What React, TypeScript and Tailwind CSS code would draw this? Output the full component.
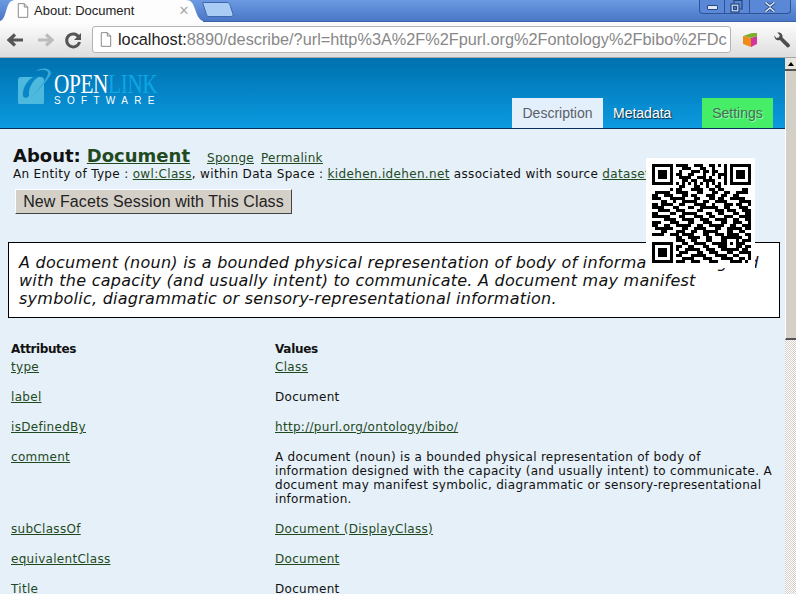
import React from 'react';

const QR_SIZE = 33;

// read off the picture by eye, the marks are overlaid in qrCells
const QR_ROWS = [
  '000000001111001110011010100000000',
  '000000000011100011001000100000000',
  '000000000100011101101100100000000',
  '000000001100110001001011100000000',
  '000000000111100111010010100000000',
  '000000000011011001111000100000000',
  '000000001010101010101010100000000',
  '000000000110001100100110000000000',
  '000000101100011110011011000000110',
  '011111001111000110001100110011110',
  '110011100011011000111001100110000',
  '111000111110001100011011001111100',
  '000110010011111001100111100001111',
  '110111100110001111001000111011001',
  '111100011000110011111100110001110',
  '001111001110000110000111011100111',
  '110000110011111000110011000110011',
  '111111000110001110011000111001111',
  '000011110011110011100111100110011',
  '111000111000110001110001100111001',
  '110011001111100110011111001100111',
  '011111100011001111000110011111011',
  '000110001110011001111100011001100',
  '111100111011110001100111011110011',
  '000000001100111100110001111111001',
  '000000001110011000110001000100111',
  '000000000011001111001111010101100',
  '000000001100110001100011000111011',
  '000000001001111100111001111100110',
  '000000000111000110011100011001111',
  '000000001100011111000111100110001',
  '000000000011110001110001111001101',
  '000000001110011100011100001111010',
];

function inFinder(x: number, y: number) {
  return (x < 8 && y < 8) || (x >= QR_SIZE - 8 && y < 8) || (x < 8 && y >= QR_SIZE - 8);
}

function finderCell(x: number, y: number) {
  const fx = x >= QR_SIZE - 8 ? x - (QR_SIZE - 7) : x;
  const fy = y >= QR_SIZE - 8 ? y - (QR_SIZE - 7) : y;
  if (fx < 0 || fy < 0 || fx > 6 || fy > 6) return false;
  if (fx === 0 || fx === 6 || fy === 0 || fy === 6) return true;
  return fx >= 2 && fx <= 4 && fy >= 2 && fy <= 4;
}

function qrCells() {
  const cells: [number, number][] = [];
  for (let y = 0; y < QR_SIZE; y++) {
    for (let x = 0; x < QR_SIZE; x++) {
      let on = QR_ROWS[y][x] === '1';
      if (inFinder(x, y)) on = finderCell(x, y);
      else if (x >= 24 && x <= 28 && y >= 24 && y <= 28) {
        on = x === 24 || x === 28 || y === 24 || y === 28 || (x === 26 && y === 26);
      }
      if (on) cells.push([x, y]);
    }
  }
  return cells;
}

function PageIcon({ className }: { className: string }) {
  return (
    <svg viewBox="0 0 14 17" className={className} fill="#fff" stroke="#777" strokeWidth="1">
      <path d="M1.5 .5h7l4 4v12h-11z" />
      <path d="M8.5 .5v4h4" fill="none" />
    </svg>
  );
}

function Tab() {
  return (
    <div className="relative w-[203px] h-full shrink-0">
      <svg viewBox="0 0 203 22" className="absolute inset-0 w-[203px] h-[22px]" preserveAspectRatio="none">
        <path d="M0 21 C4 20 5 14 7 8 C9 2 11 0 16 0 H186 C191 0 193 3 195 9 C197 15 199 20 203 21 V22 H0 Z" fill="#fdfdfd" />
      </svg>
      <div className="relative flex items-center h-full pl-[17px]">
        <PageIcon className="w-[12px] h-[15px] shrink-0" />
        <span className="ml-[5px] text-[13px] text-[#222] font-['Liberation_Sans',sans-serif] whitespace-nowrap">About: Document</span>
        <span className="ml-[44px] text-[#aaa] text-[13px] leading-none font-['DejaVu_Sans',sans-serif]">✕</span>
      </div>
    </div>
  );
}

function WindowButtons() {
  return (
    <div className="absolute right-[5px] top-0 w-[92px] h-[14px] flex rounded-b-[4px] border border-t-0 border-[#2f5496] bg-[#5a87d6]">
      <div className="w-[25px] flex items-center justify-center border-r border-[#2f5496]">
        <div className="w-[11px] h-[5px] mt-[1px] rounded-[1px] bg-[#dde8f8] border border-[#27467e]" />
      </div>
      <div className="w-[25px] flex items-center justify-center border-r border-[#2f5496]">
        <svg viewBox="0 0 14 13" className="w-[14px] h-[13px]" fill="none" stroke="#27467e" strokeWidth="1.2">
          <rect x="1" y="4" width="8" height="8" fill="#c6d8f2" />
          <rect x="3.5" y="6.5" width="3" height="3" fill="#5a87d6" />
          <path d="M4 3V0.5h8V9H10" />
        </svg>
      </div>
      <div className="flex-1 flex items-center justify-center">
        <svg viewBox="0 0 12 10" className="w-[12px] h-[10px]">
          <path d="M1.5 .5 6 4l4.500-3.500M1.500 9.500 6 6l4.500 3.500" stroke="#27467e" strokeWidth="3.200" fill="none" />
          <path d="M1.500 .5 6 4l4.500-3.500M1.500 9.500 6 6l4.500 3.500" stroke="#e4edf9" strokeWidth="1.500" fill="none" />
        </svg>
      </div>
    </div>
  );
}

function TitleBar() {
  return (
    <div className="relative h-[22px] shrink-0 flex bg-gradient-to-b from-[#6c9ae2] to-[#4a77c6] border-b border-[#3d62a8]">
      <Tab />
      <svg viewBox="0 0 32 15" className="w-[32px] h-[15px] -ml-[1px] mt-[2px] shrink-0">
        <path d="M1 .5H25C27 .5 28 2 29 6L31 12C31.500 14 30 14.500 29 14.500H7C5 14.500 4.500 13 4 11L1 2C.7 1 .7 .5 1 .5Z" fill="#a9ccf5" stroke="#3f66ad" />
      </svg>
      <WindowButtons />
    </div>
  );
}

function Toolbar() {
  return (
    <div className="h-[36px] shrink-0 flex items-center bg-gradient-to-b from-[#fdfdfd] to-[#dedede] border-b border-[#a8a8a8]">
      <svg viewBox="0 0 92 24" className="w-[92px] h-[24px] shrink-0">
        <path d="M23 12H10M15 6.500 9 12l6 5.500" fill="none" stroke="#555" strokeWidth="3.200" />
        <path d="M38 12h13M46 6.500 52 12l-6 5.500" fill="none" stroke="#bcbcbc" strokeWidth="3.200" />
        <path d="M79 9.500A6.500 6.500 0 1 0 79.500 14" fill="none" stroke="#555" strokeWidth="3" />
        <path d="M81 5v7h-7z" fill="#555" />
      </svg>
      <div className="flex-1 min-w-0 h-[27px] flex items-center rounded-[3px] border border-[#b4b4b4] bg-white overflow-hidden pl-[7px]">
        <PageIcon className="w-[12px] h-[15px] shrink-0" />
        <span className="ml-[6px] text-[16.3px] text-[#888] font-['Liberation_Sans',sans-serif] whitespace-nowrap">
          <span className="text-[#222]">localhost:</span>8890/describe/?url=http%3A%2F%2Fpurl.org%2Fontology%2Fbibo%2FDc
        </span>
      </div>
      <div className="w-[65px] shrink-0 flex items-center pl-[11px] gap-[16px]">
        <svg viewBox="0 0 16 16" className="w-[16px] h-[16px] shrink-0">
          <path d="M1 4 9 6V15L1 12Z" fill="#ef8a1c" />
          <path d="M9 6 15 4V12L9 15Z" fill="#d3359a" />
          <path d="M1 4 10 1H15V4L9 6Z" fill="#7fae2c" />
        </svg>
        <svg viewBox="0 0 16 16" className="w-[17px] h-[17px] shrink-0">
          <path d="M15 13 8 6C8.700 3.500 6.500.5 3 1.500L5.500 4 4.500 6 2 6.500 0.500 4C0 7.500 3 9.500 5.500 8.500L12.500 15.500C13.500 16 15.500 14.500 15 13Z" fill="#4d4d4d" />
        </svg>
      </div>
    </div>
  );
}

function Logo() {
  return (
    <div className="flex items-start pt-[8px] pl-[17px]">
      <svg viewBox="0 0 36 38" className="w-[36px] h-[38px] shrink-0">
        <rect x="1" y="11" width="26" height="28" rx="3" fill="#4db9dd" />
        <path d="M6 30C5 20 14 8 24 10 17 12 11 21 12 30 9 33 7 32 6 30Z" fill="#0a86c6" />
        <path d="M13 33C21 25 31 14 34 8 34 2 25 1 19 5 26 3 32 4 31 8 29 14 19 26 13 33Z" fill="#39a9d9" />
      </svg>
      <div className="ml-[1px] mt-[8px] w-[104px]">
        <div className="origin-left scale-x-[0.76] whitespace-nowrap text-[28px] leading-[20px] tracking-[-0.5px] font-['Liberation_Serif',serif]">
          <span className="text-white">OPEN</span>
          <span className="text-[#0ca6e4]">LINK</span>
        </div>
        <div className="mt-[2px] text-[10px] leading-[10px] tracking-[6.300px] text-white whitespace-nowrap font-['Liberation_Sans',sans-serif]">SOFTWARE</div>
      </div>
    </div>
  );
}

function Header() {
  return (
    <div className="h-[71px] shrink-0 flex justify-between bg-gradient-to-b from-[#0071af] to-[#0c9ae0] border-b border-[#06305f]">
      <Logo />
      <div className="self-end flex items-stretch h-[30px] mr-[12px] text-[14px] font-['Liberation_Sans',sans-serif]">
        <div className="w-[91px] flex items-center justify-center bg-[#e3f0fb] text-[#5a6068]">Description</div>
        <div className="w-[99px] flex items-center pl-[10px] text-white [text-shadow:1px_1px_1px_#223]">Metadata</div>
        <div className="w-[71px] flex items-center justify-center bg-[#45ee66] text-[#4e6a50] [text-shadow:1px_1px_1px_#9fb]">Settings</div>
      </div>
    </div>
  );
}

const LINK = 'text-[#1f4a1f] underline';

const ROWS: { attr: string; value: string; link?: boolean }[] = [
  { attr: 'type', value: 'Class', link: true },
  { attr: 'label', value: 'Document' },
  { attr: 'isDefinedBy', value: 'http://purl.org/ontology/bibo/', link: true },
  {
    attr: 'comment',
    value:
      'A document (noun) is a bounded physical representation of body of\ninformation designed with the capacity (and usually intent) to communicate. A\ndocument may manifest symbolic, diagrammatic or sensory-representational\ninformation.',
  },
  { attr: 'subClassOf', value: 'Document (DisplayClass)', link: true },
  { attr: 'equivalentClass', value: 'Document', link: true },
  { attr: 'Title', value: 'Document' },
];

function Content() {
  return (
    <div className="flex-1 min-h-0 overflow-hidden bg-[#e6f0f8] text-[12px] leading-[14px] text-[#111] font-['DejaVu_Sans',sans-serif]">
      <div className="pl-[13px] pt-[17px]">
        <div className="flex items-baseline h-[21px] whitespace-nowrap">
          <span className="text-[18px] leading-[20px] font-bold">About: </span>
          <a className={`ml-[6px] text-[18px] leading-[20px] font-bold ${LINK}`}>Document</a>
          <a className={`ml-[17px] tracking-[0.3px] ${LINK}`}>Sponge</a>
          <a className={`ml-[7px] tracking-[0.3px] ${LINK}`}>Permalink</a>
        </div>
        <div className="whitespace-nowrap tracking-[0.33px]">
          An Entity of Type : <a className={LINK}>owl:Class</a>, within Data Space : <a className={LINK}>kidehen.idehen.net</a> associated with source <a className={LINK}>dataset</a>
        </div>
        <button className="block ml-[2px] mt-[8px] w-[277px] h-[25px] bg-[#d4d0c8] border border-t-white border-l-white border-r-[#444] border-b-[#444] text-[16px] leading-[20px] tracking-[0.09px] text-[#222] font-['Liberation_Sans',sans-serif]">
          New Facets Session with This Class
        </button>
      </div>
      <div className="ml-[8px] mr-[5px] mt-[28px] h-[76px] border border-black bg-white pl-[10px] pt-[11px] text-[16px] leading-[18px] italic tracking-[0.25px] text-[#111] whitespace-pre-line">
        {'A document (noun) is a bounded physical representation of body of information designed\nwith the capacity (and usually intent) to communicate. A document may manifest\nsymbolic, diagrammatic or sensory-representational information.'}
      </div>
      <div className="grid grid-cols-[264px_494px] pl-[11px] mt-[24px] tracking-[0.3px]">
        <div className="font-bold pb-[4px] tracking-[-0.4px]">Attributes</div>
        <div className="font-bold pb-[4px] tracking-[-0.3px]">Values</div>
        {ROWS.map((row) => (
          <React.Fragment key={row.attr}>
            <div className="pb-[16px]">
              {row.attr === 'Title' ? <span className="text-[#1f4a1f]">{row.attr}</span> : <a className={LINK}>{row.attr}</a>}
            </div>
            <div className="pb-[16px] whitespace-pre">{row.link ? <a className={LINK}>{row.value}</a> : row.value}</div>
          </React.Fragment>
        ))}
      </div>
    </div>
  );
}

function Scrollbar() {
  return (
    <div className="w-[11px] shrink-0 flex flex-col bg-[repeating-conic-gradient(#d4d0c8_0_25%,#fff_0_50%)] bg-[length:2px_2px]">
      <div className="h-[13px] flex items-center justify-center bg-[#e8e5df] border-b-2 border-[#555]">
        <div className="w-0 h-0 border-x-[3px] border-x-transparent border-b-[4px] border-b-black" />
      </div>
      <div className="h-[269px] bg-[#d4d0c8] border-l border-white border-b-2 border-b-[#555]" />
    </div>
  );
}

export default function App() {
  const cells = qrCells();
  return (
    <div className="relative w-[796px] h-[594px] overflow-hidden flex flex-col">
      <TitleBar />
      <Toolbar />
      <div className="flex-1 min-h-0 flex">
        <div className="flex-1 min-w-0 flex flex-col">
          <Header />
          <Content />
        </div>
        <Scrollbar />
      </div>
      <div className="absolute left-[646px] top-[158px] w-[109px] h-[110px] bg-white pl-[6px] pt-[6px]">
        <svg viewBox="0 0 33 33" className="w-[99px] h-[99px]" shapeRendering="crispEdges">
          {cells.map(([x, y]) => (
            <rect key={`${x}-${y}`} x={x} y={y} width="1" height="1" fill="#000" />
          ))}
        </svg>
      </div>
    </div>
  );
}
